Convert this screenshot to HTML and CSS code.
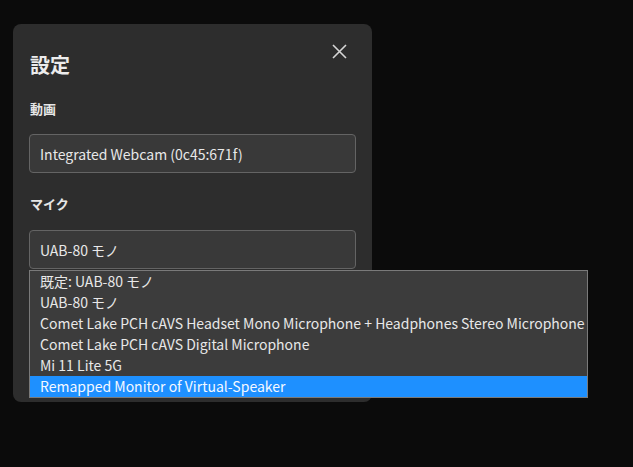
FILE: index.html
```html
<!DOCTYPE html>
<html lang="ja">
<head>
<meta charset="utf-8">
<link rel="stylesheet" href="styles.css">
</head>
<body>
<div class="modal">
  <button class="close" aria-label="閉じる">
    <svg width="15" height="15" viewBox="0 0 15 15"><path d="M1 1L14 14M14 1L1 14" stroke="#d6d6d6" stroke-width="1.6" fill="none"/></svg>
  </button>
  <h2 class="title">設定</h2>
  <div class="label first">動画</div>
  <div class="field">Integrated Webcam (0c45:671f)</div>
  <div class="label">マイク</div>
  <div class="select-wrap">
    <div class="field">UAB-80 モノ</div>
    <ul class="dropdown">
      <li>既定: UAB-80 モノ</li>
      <li>UAB-80 モノ</li>
      <li>Comet Lake PCH cAVS Headset Mono Microphone + Headphones Stereo Microphone</li>
      <li>Comet Lake PCH cAVS Digital Microphone</li>
      <li>Mi 11 Lite 5G</li>
      <li class="active">Remapped Monitor of Virtual-Speaker</li>
    </ul>
  </div>
</div>
</body>
</html>
```

FILE: styles.css
```css
html, body {
  margin: 0;
  height: 100%;
  background: #0b0b0b;
}
body {
  padding: 24px 0 0 13px;
  box-sizing: border-box;
  font-family: "Noto Sans CJK JP", "Noto Sans", sans-serif;
  color: #e6e6e6;
}
.modal {
  position: relative;
  width: 359px;
  height: 378px;
  box-sizing: border-box;
  padding: 27px 16px 0 16px;
  background: #2d2d2d;
  border-radius: 8px;
}
.close {
  position: absolute;
  top: 20px;
  right: 25px;
  width: 15px;
  height: 15px;
  padding: 0;
  border: 0;
  background: none;
  display: flex;
}
.title {
  margin: 0;
  font-size: 20px;
  line-height: 28px;
  font-weight: 700;
  color: #ececec;
  padding-left: 1px;
}
.label {
  margin-top: 21px;
  font-size: 13px;
  line-height: 20px;
  font-weight: 700;
  color: #e6e6e6;
  padding-left: 1px;
}
.label.first {
  margin-top: 20px;
}
.field {
  margin-top: 15px;
  height: 39px;
  box-sizing: border-box;
  border: 1px solid #646464;
  border-radius: 4px;
  background: #393939;
  padding: 0 10px;
  display: flex;
  align-items: center;
  font-size: 14px;
  color: #e8e8e8;
}
.select-wrap {
  position: relative;
}
.select-wrap .field {
  margin-top: 16px;
}
.dropdown {
  position: absolute;
  top: 40px;
  left: 0;
  width: 559px;
  box-sizing: border-box;
  margin: 0;
  padding: 0;
  list-style: none;
  background: #3c3c3c;
  border: 1px solid #7a7a7a;
}
.dropdown li {
  height: 21px;
  line-height: 21px;
  padding-left: 10px;
  font-size: 14px;
  color: #e8e8e8;
  white-space: nowrap;
}
.dropdown li.active {
  background: #1e90ff;
  color: #f4f8ff;
}
```
